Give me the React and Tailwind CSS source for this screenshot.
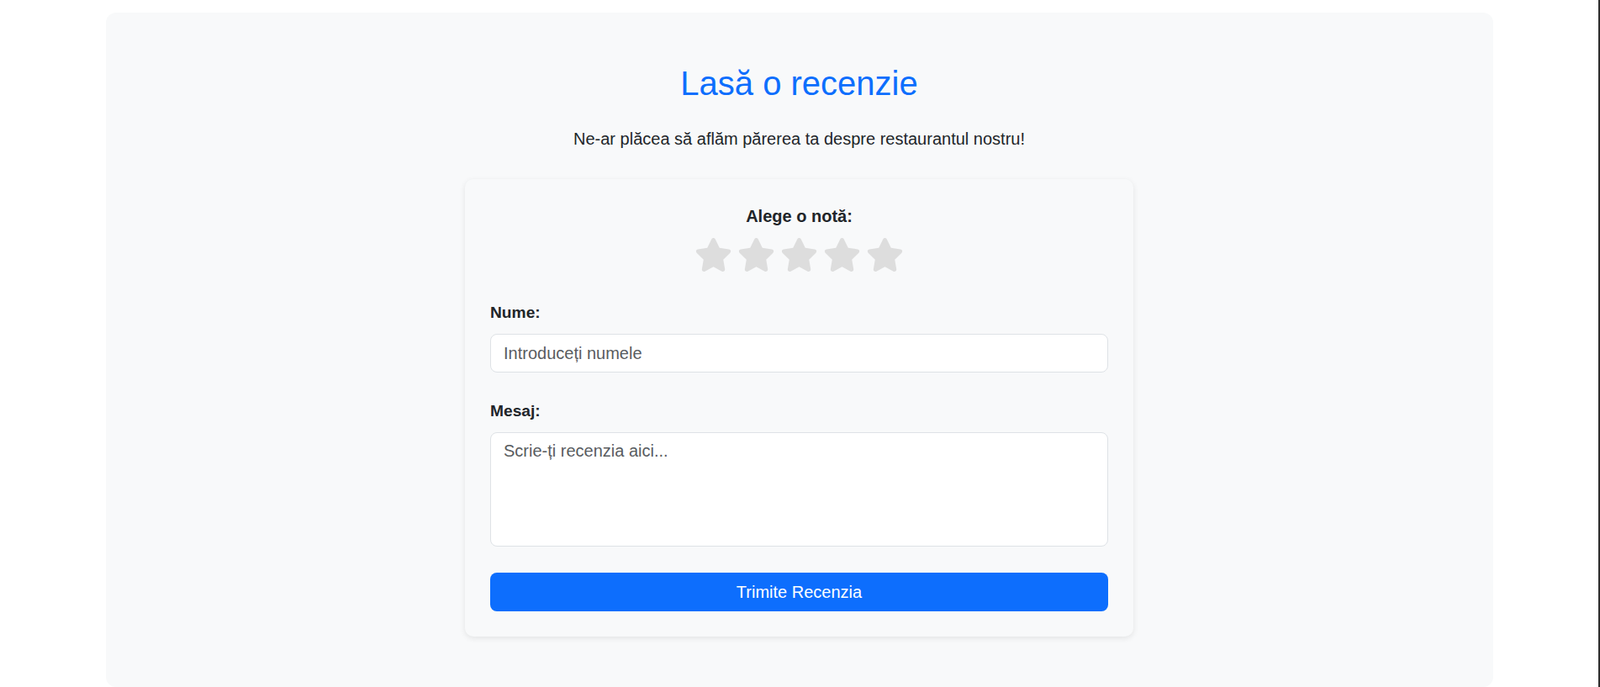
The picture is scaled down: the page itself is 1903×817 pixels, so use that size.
import React from "react";

const Star = () => (
    <svg viewBox="0 0 576 512" className="w-[45px] h-[40px]" fill="#dddddd">
        <path d="M316.9 18C311.6 7 300.4 0 288.1 0s-23.4 7-28.8 18L195 150.3 51.4 171.5c-12 1.8-22 10.2-25.7 21.7s-.7 24.2 7.9 32.7L137.8 329 113.2 474.7c-2 12 3 24.2 12.9 31.3s23 8 33.8 2.3l128.3-68.5 128.3 68.5c10.8 5.7 23.9 4.9 33.8-2.3s14.9-19.3 12.9-31.3L438.5 329 542.7 225.9c8.6-8.5 11.7-21.2 7.9-32.7s-13.7-19.9-25.7-21.7L381.2 150.3 316.9 18z" />
    </svg>
);

export default function App() {
    return (
        <div className="min-h-screen bg-white border-r-2 border-[#2e2e2e] font-['Liberation_Sans',Arial,sans-serif] text-[#212529] pt-[15px]">
            {/* Review panel */}
            <section className="w-[1650px] mx-auto bg-[#f8f9fa] rounded-xl pt-[60px] pb-[60px]">
                <h1 className="text-center text-[40px] leading-[48px] text-[#0d6efd]">Lasă o recenzie</h1>
                <p className="mt-[27px] text-center text-[20px] leading-[30px]">
                    Ne-ar plăcea să aflăm părerea ta despre restaurantul nostru!
                </p>

                <form className="mt-[33px] w-[795px] mx-auto bg-[#f8f9fa] rounded-[10px] shadow-[0_2px_7px_rgba(0,0,0,0.09)] px-[30px] pt-[29px] pb-[30px]">
                    <div className="text-center text-[20px] leading-[30px] font-bold">Alege o notă:</div>
                    <div className="mt-[11px] flex justify-center gap-[6px]">
                        <Star />
                        <Star />
                        <Star />
                        <Star />
                        <Star />
                    </div>

                    <label className="block mt-[35px] text-[19.2px] leading-[27px] font-bold">Nume:</label>
                    <input
                        placeholder="Introduceți numele"
                        className="block w-full mt-3 h-[46px] px-[15px] bg-white border border-[#dee2e6] rounded-lg text-[20px] leading-[30px] outline-none placeholder:text-[#595c5f]"
                    />

                    <label className="block mt-[32px] text-[19.2px] leading-[27px] font-bold">Mesaj:</label>
                    <textarea
                        placeholder="Scrie-ți recenzia aici..."
                        className="block w-full mt-3 h-[136px] px-[15px] py-[6px] bg-white border border-[#dee2e6] rounded-lg text-[20px] leading-[30px] outline-none resize-none placeholder:text-[#595c5f]"
                    />

                    <button
                        type="button"
                        className="block w-full mt-[31px] h-[46px] rounded-lg bg-[#0d6efd] text-white text-[20px] leading-[30px]"
                    >
                        Trimite Recenzia
                    </button>
                </form>
            </section>
        </div>
    );
}
